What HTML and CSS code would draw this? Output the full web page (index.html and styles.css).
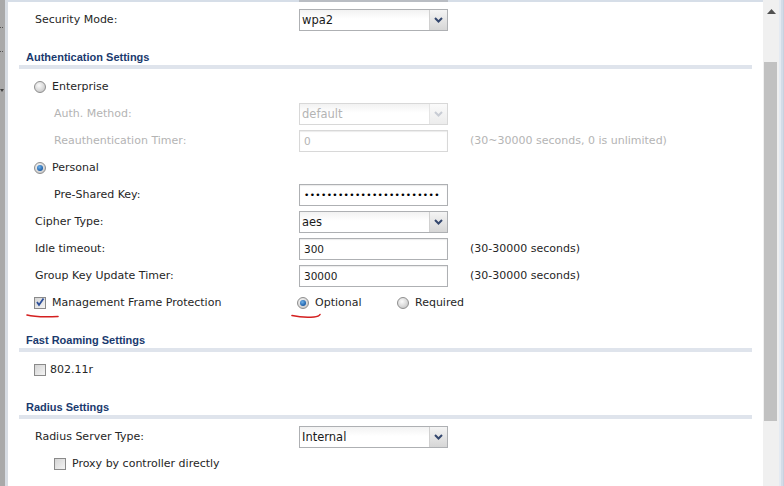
FILE: index.html
```html
<!DOCTYPE html>
<html>
<head>
<meta charset="utf-8">
<link rel="stylesheet" href="styles.css">
</head>
<body>
<div class="window">
  <div class="side">
    <span class="side-dot d1"></span>
    <span class="side-dot d2"></span>
    <span class="side-arrow"></span>
  </div>
  <div class="panel">
    <div class="row">
      <div class="lbl">Security Mode:</div>
      <div class="select"><span class="val">wpa2</span><span class="arrow"><svg width="9" height="6" viewBox="0 0 9 6"><path d="M1 1 L4.5 4.5 L8 1" fill="none" stroke="#34476e" stroke-width="2"/></svg></span></div>
    </div>

    <div class="section"><div class="sec-title">Authentication Settings</div><div class="sec-bar"></div></div>

    <div class="row">
      <div class="lbl"><span class="radio"></span>Enterprise</div>
    </div>
    <div class="row disabled">
      <div class="lbl sub">Auth. Method:</div>
      <div class="select dis"><span class="val">default</span><span class="arrow"><svg width="9" height="6" viewBox="0 0 9 6"><path d="M1 1 L4.5 4.5 L8 1" fill="none" stroke="#c8ccd4" stroke-width="2"/></svg></span></div>
    </div>
    <div class="row disabled">
      <div class="lbl sub">Reauthentication Timer:</div>
      <div class="input dis">0</div>
      <div class="hint">(30~30000 seconds, 0 is unlimited)</div>
    </div>
    <div class="row">
      <div class="lbl"><span class="radio on"></span>Personal</div>
    </div>
    <div class="row">
      <div class="lbl sub">Pre-Shared Key:</div>
      <div class="input pw">&bull;&bull;&bull;&bull;&bull;&bull;&bull;&bull;&bull;&bull;&bull;&bull;&bull;&bull;&bull;&bull;&bull;&bull;&bull;&bull;&bull;&bull;&bull;&bull;</div>
    </div>
    <div class="row">
      <div class="lbl">Cipher Type:</div>
      <div class="select"><span class="val">aes</span><span class="arrow"><svg width="9" height="6" viewBox="0 0 9 6"><path d="M1 1 L4.5 4.5 L8 1" fill="none" stroke="#34476e" stroke-width="2"/></svg></span></div>
    </div>
    <div class="row">
      <div class="lbl">Idle timeout:</div>
      <div class="input">300</div>
      <div class="hint">(30-30000 seconds)</div>
    </div>
    <div class="row">
      <div class="lbl">Group Key Update Timer:</div>
      <div class="input">30000</div>
      <div class="hint">(30-30000 seconds)</div>
    </div>
    <div class="row mark-row">
      <div class="lbl"><span class="check on"><svg width="10" height="10" viewBox="0 0 10 10"><path d="M2 5 L4 8 L8.5 1.5" fill="none" stroke="#2c4f9a" stroke-width="1.8"/></svg></span>Management Frame Protection</div>
      <div class="choices">
        <div class="choice opt"><span class="radio on"></span>Optional</div>
        <div class="choice"><span class="radio"></span>Required</div>
      </div>
      <svg class="ink ink1" width="34" height="6" viewBox="0 0 34 6"><path d="M1 2 Q10 4.5 32 3.5" fill="none" stroke="#d42020" stroke-width="1.6" stroke-linecap="round"/></svg>
      <svg class="ink ink2" width="32" height="7" viewBox="0 0 32 7"><path d="M1 2.5 Q12 5 23 4 Q28 3.5 29 1.5" fill="none" stroke="#d42020" stroke-width="1.6" stroke-linecap="round"/></svg>
    </div>

    <div class="section"><div class="sec-title">Fast Roaming Settings</div><div class="sec-bar"></div></div>

    <div class="row">
      <div class="lbl"><span class="check"></span><span class="tight">802.11r</span></div>
    </div>

    <div class="section"><div class="sec-title">Radius Settings</div><div class="sec-bar"></div></div>

    <div class="row">
      <div class="lbl">Radius Server Type:</div>
      <div class="select"><span class="val">Internal</span><span class="arrow"><svg width="9" height="6" viewBox="0 0 9 6"><path d="M1 1 L4.5 4.5 L8 1" fill="none" stroke="#34476e" stroke-width="2"/></svg></span></div>
    </div>
    <div class="row">
      <div class="lbl sub2"><span class="check"></span>Proxy by controller directly</div>
    </div>
  </div>
  <div class="scrollbar">
    <div class="sb-up"><svg width="9" height="5" viewBox="0 0 9 5"><path d="M0 5 L4.5 0 L9 5 Z" fill="#505050"/></svg></div>
    <div class="sb-thumb"></div>
  </div>
  <div class="edge"></div>
</div>
</body>
</html>
```

FILE: styles.css
```css
* { box-sizing: border-box; }
html, body { margin: 0; padding: 0; }
body {
  width: 784px;
  height: 486px;
  overflow: hidden;
  background: #fff;
  font-family: "DejaVu Sans", "Liberation Sans", sans-serif;
  font-size: 11px;
  color: #262626;
}
.window {
  display: flex;
  height: 486px;
}
.side {
  width: 8px;
  flex: none;
  background: #a9a9a9;
  border-right: 3px solid #d7dce3;
  position: relative;
  overflow: hidden;
}
.side-dot {
  position: absolute;
  left: 0;
  width: 3px;
  height: 1px;
  border-left: 1px solid #555;
  border-right: 1px solid #555;
}
.side-dot.d1 { top: 27px; }
.side-dot.d2 { top: 51px; }
.side-arrow {
  position: absolute;
  left: 0;
  top: 89px;
  width: 0;
  height: 0;
  border-left: 2px solid transparent;
  border-right: 2px solid transparent;
  border-top: 3px solid #444;
}
.panel {
  flex: 1;
  border-top: 2px solid #d6dee8;
  padding: 4px 11px 0 11px;
  position: relative;
}
.panel::before {
  content: "";
  position: absolute;
  left: 291px;
  top: -2px;
  width: 149px;
  height: 2px;
  background: #b9bdc3;
}
.row {
  height: 27px;
  display: grid;
  grid-template-columns: 264px 149px auto;
  align-items: center;
  padding-left: 16px;
  position: relative;
}
.lbl {
  display: flex;
  align-items: center;
  white-space: nowrap;
}
.lbl.sub { padding-left: 19px; }
.lbl.sub2 { padding-left: 20px; }
.disabled .lbl, .disabled .hint { color: #b4b4b4; }
.select, .input {
  height: 22px;
  border: 1px solid #aeb0b3;
  background: linear-gradient(#f2f2f2, #fff 45%);
  display: flex;
  align-items: center;
  position: relative;
}
.select .val { flex: 1; padding-left: 2px; color: #1a1a1a; font-size: 11.5px; }
.select .arrow {
  width: 18px;
  height: 20px;
  border-left: 1px solid #d0d0d0;
  background: linear-gradient(#f4f4f4, #d6d6d6);
  display: flex;
  align-items: center;
  justify-content: center;
}
.select.dis { border-color: #d8d8d8; }
.select.dis .val { color: #b4b4b4; }
.select.dis .arrow { background: linear-gradient(#fafafa, #ececec); border-left-color: #e4e4e4; }
.input { padding-left: 4px; color: #1a1a1a; font-size: 10.5px; background: #fff; box-shadow: inset 0 1px 1px #ececec; overflow: hidden; white-space: nowrap; }
.input.dis { border-color: #d8d8d8; color: #b4b4b4; }
.input.pw { letter-spacing: 0.35px; font-size: 9px; padding-left: 4px; color: #000; }
.hint { padding-left: 22px; white-space: nowrap; }
.radio {
  width: 12px;
  height: 12px;
  border-radius: 50%;
  border: 1px solid #8e8e8e;
  background: radial-gradient(circle at 40% 35%, #fbfbfb, #cfcfcf 70%, #b8b8b8);
  margin-right: 6px;
  flex: none;
  position: relative;
}
.radio.on::after {
  content: "";
  position: absolute;
  left: 2px; top: 2px;
  width: 6px; height: 6px;
  border-radius: 50%;
  background: radial-gradient(circle at 40% 35%, #6fb2ea, #1c5ea8 70%);
}
.lbl > .radio { margin-left: -1px; }
.check {
  width: 12px;
  height: 12px;
  border: 1px solid #8a8a8a;
  background: linear-gradient(135deg, #d4d4d4, #f4f4f4);
  margin-right: 6px;
  margin-left: -1px;
  flex: none;
  display: flex;
  align-items: center;
  justify-content: center;
}
.check svg { margin-top: -1px; }
.tight { margin-left: -2px; }
.choices { display: flex; margin-left: -2px; }
.choice { display: flex; align-items: center; width: 100px; flex: none; }
.ink { position: absolute; }
.ink1 { left: 7px; top: 24px; }
.ink2 { left: 272px; top: 24px; }
.section {
  margin-top: 16px;
  margin-bottom: 4px;
}
.sec-title {
  height: 16px;
  line-height: 16px;
  padding-left: 7px;
  font-family: "Liberation Sans", Arial, sans-serif;
  font-weight: bold;
  font-size: 11px;
  color: #1a3a6e;
}
.sec-bar {
  height: 4px;
  background: #dfe4ec;
}
.scrollbar {
  width: 16px;
  flex: none;
  background: #f0f0f0;
  position: relative;
}
.sb-up {
  height: 18px;
  display: flex;
  justify-content: center;
  padding-top: 9px;
}
.sb-thumb {
  position: absolute;
  left: 1px;
  right: 2px;
  top: 62px;
  height: 359px;
  background: #c1c1c1;
}
.edge {
  width: 5px;
  flex: none;
  background: #d3dce8;
  border-left: 2px solid #e4eaf2;
  border-right: 1px solid #c7d2e0;
}
```
